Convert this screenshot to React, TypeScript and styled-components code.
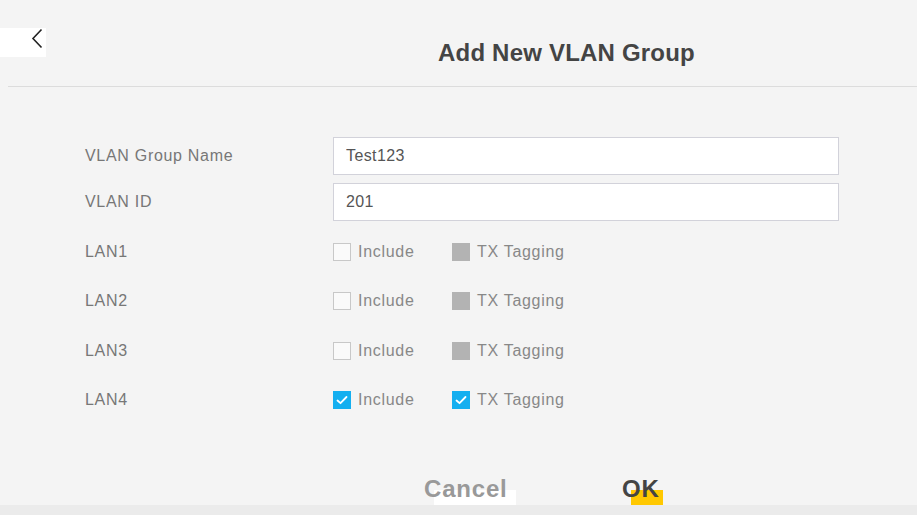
import React from "react";
import styled, { createGlobalStyle } from "styled-components";

const Global = createGlobalStyle`
  html, body { margin: 0; padding: 0; background: #ebebeb; }
  body { font-family: "Liberation Sans", Arial, sans-serif; }
  * { box-sizing: border-box; }
`;

const Panel = styled.div`
  width: 917px;
  height: 505px;
  background: #f4f4f4;
  box-shadow: 0 1px 3px rgba(0,0,0,0.18);
  display: flex;
  flex-direction: column;
  overflow: hidden;
`;

const Header = styled.div`
  height: 87px;
  margin-left: 8px;
  border-bottom: 1px solid #dcdcdc;
  display: flex;
  align-items: flex-start;
`;

const Back = styled.button`
  margin: 28px 0 0 -8px;
  width: 46px;
  height: 29px;
  background: #ffffff;
  border: none;
  padding: 0 0 0 31px;
  display: flex;
  align-items: flex-start;
  cursor: pointer;
`;

const Title = styled.h1`
  margin: 38px 0 0 392px;
  font-size: 24px;
  font-weight: 700;
  color: #444;
  letter-spacing: 0.2px;
  line-height: 30px;
`;

const Form = styled.div`
  padding: 46px 0 0 85px;
  display: flex;
  flex-direction: column;
`;

const FieldRow = styled.div<{ $h: number }>`
  display: grid;
  grid-template-columns: 248px 506px;
  align-items: center;
  height: ${(p) => p.$h}px;
`;

const Label = styled.div`
  font-size: 16px;
  color: #777;
  letter-spacing: 0.7px;
`;

const Input = styled.input`
  height: 38px;
  width: 506px;
  border: 1px solid #d2d2da;
  background: #fff;
  padding: 0 0 0 12px;
  font-family: "Liberation Sans", Arial, sans-serif;
  font-size: 16px;
  color: #555;
  letter-spacing: 0.4px;
  outline: none;
`;

const Checks = styled.div`
  display: flex;
  align-items: center;
`;

const Check = styled.label<{ $w: number }>`
  display: flex;
  align-items: center;
  width: ${(p) => p.$w}px;
  gap: 7px;
  font-size: 16px;
  color: #888;
  letter-spacing: 0.7px;
`;

const Box = styled.span<{ $state: "off" | "on" | "disabled" }>`
  width: 18px;
  height: 18px;
  flex: none;
  display: flex;
  align-items: center;
  justify-content: center;
  background: ${(p) => (p.$state === "on" ? "#14aff0" : p.$state === "disabled" ? "#b3b3b3" : "#fafafa")};
  border: 1px solid ${(p) => (p.$state === "on" ? "#14aff0" : p.$state === "disabled" ? "#b3b3b3" : "#c8c8c8")};
`;

const Footer = styled.div`
  margin-top: auto;
  height: 40px;
  display: flex;
  align-items: flex-end;
  padding-left: 424px;
`;

const ActionBtn = styled.button<{ $primary?: boolean; $w: number }>`
  position: relative;
  width: ${(p) => p.$w}px;
  height: 40px;
  background: none;
  border: none;
  padding: 0 0 4px 0;
  display: flex;
  align-items: flex-end;
  font-family: "Liberation Sans", Arial, sans-serif;
  font-size: 24px;
  line-height: 24px;
  font-weight: 700;
  letter-spacing: 0.8px;
  color: ${(p) => (p.$primary ? "#444" : "#999")};
  text-align: left;
  cursor: pointer;
  span { position: relative; z-index: 1; }
`;

const Underlay = styled.i<{ $color: string; $left: number; $w: number }>`
  position: absolute;
  left: ${(p) => p.$left}px;
  bottom: 0;
  width: ${(p) => p.$w}px;
  height: 15px;
  background: ${(p) => p.$color};
  z-index: 0;
`;

const Tick = () => (
  <svg width="14" height="14" viewBox="0 0 14 14">
    <path d="M2.5 7.5 L5.5 10.2 L11.5 4" stroke="#fff" strokeWidth="1.8" fill="none" strokeLinecap="round" strokeLinejoin="round" />
  </svg>
);

const lans = [
  { name: "LAN1", on: false },
  { name: "LAN2", on: false },
  { name: "LAN3", on: false },
  { name: "LAN4", on: true },
];

export default function App() {
  return (
    <>
      <Global />
      <Panel>
        <Header>
          <Back aria-label="Back">
            <svg width="12" height="22" viewBox="0 0 12 22">
              <path d="M10.5 1.5 L2 10.5 L10.5 19.5" stroke="#222" strokeWidth="1.6" fill="none" />
            </svg>
          </Back>
          <Title>Add New VLAN Group</Title>
        </Header>
        <Form>
          <FieldRow $h={46}>
            <Label>VLAN Group Name</Label>
            <Input defaultValue="Test123" />
          </FieldRow>
          <FieldRow $h={46}>
            <Label>VLAN ID</Label>
            <Input defaultValue="201" />
          </FieldRow>
          <div style={{ height: 2 }} />
          {lans.map((l) => (
            <FieldRow $h={49.5} key={l.name}>
              <Label>{l.name}</Label>
              <Checks>
                <Check $w={119}>
                  <Box $state={l.on ? "on" : "off"}>{l.on && <Tick />}</Box>
                  Include
                </Check>
                <Check $w={140}>
                  <Box $state={l.on ? "on" : "disabled"}>{l.on && <Tick />}</Box>
                  TX Tagging
                </Check>
              </Checks>
            </FieldRow>
          ))}
        </Form>
        <Footer>
          <ActionBtn $w={198}>
            <Underlay $color="#ffffff" $left={10} $w={82} />
            <span>Cancel</span>
          </ActionBtn>
          <ActionBtn $primary $w={60}>
            <Underlay $color="#ffc800" $left={9} $w={32} />
            <span>OK</span>
          </ActionBtn>
        </Footer>
      </Panel>
    </>
  );
}
